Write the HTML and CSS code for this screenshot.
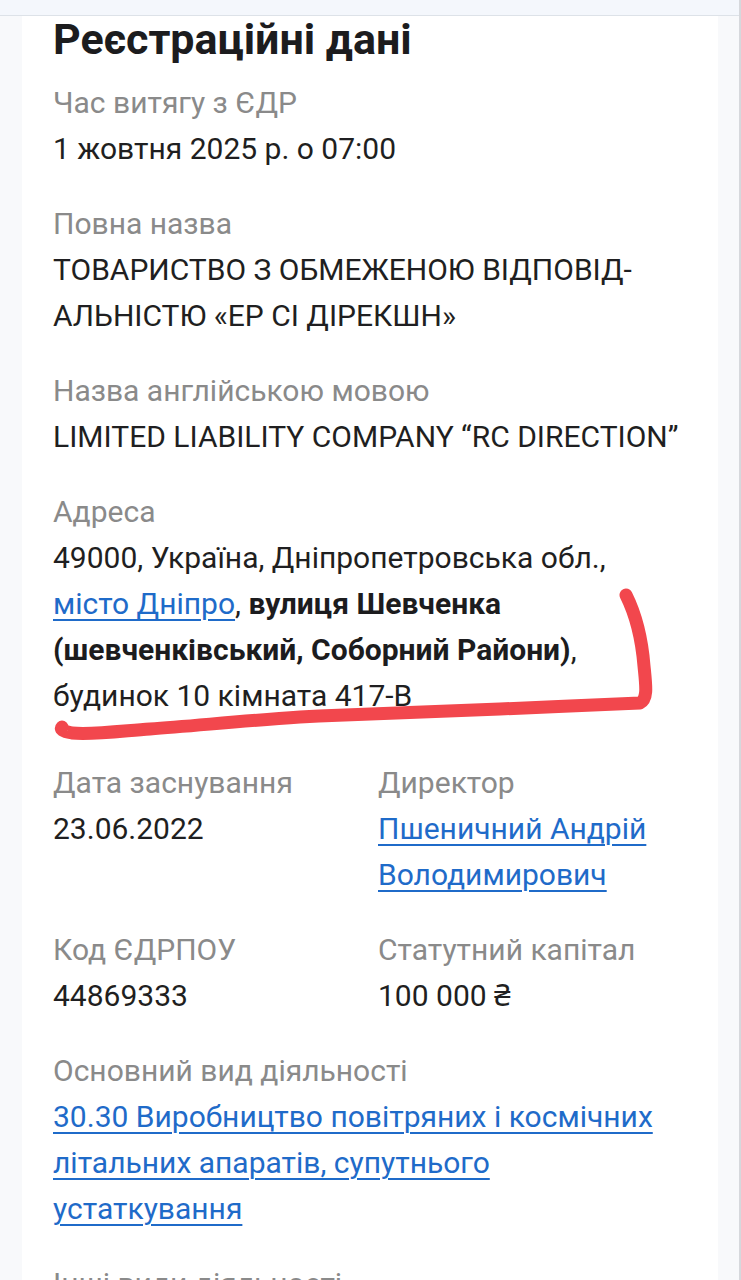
FILE: index.html
```html
<!DOCTYPE html>
<html lang="uk">
<head>
<meta charset="utf-8">
<title>Реєстраційні дані</title>
<link rel="stylesheet" href="styles.css">
</head>
<body>
<div class="page">
  <div class="topbar"></div>
  <div class="main">
    <section class="card">
      <h1 class="title">Реєстраційні дані</h1>

      <div class="field">
        <div class="label">Час витягу з ЄДР</div>
        <div class="value">1 жовтня 2025 р. о 07:00</div>
      </div>

      <div class="field">
        <div class="label">Повна назва</div>
        <div class="value">ТОВАРИСТВО З ОБМЕЖЕНОЮ ВІДПОВІД-<br>АЛЬНІСТЮ «ЕР СІ ДІРЕКШН»</div>
      </div>

      <div class="field">
        <div class="label">Назва англійською мовою</div>
        <div class="value">LIMITED LIABILITY COMPANY “RC DIRECTION”</div>
      </div>

      <div class="field field-address">
        <div class="label">Адреса</div>
        <div class="value">49000, Україна, Дніпропетровська обл.,<br><a class="link" href="#">місто Дніпро</a>, <b>вулиця Шевченка<br>(шевченківський, Соборний Райони)</b>,<br>будинок 10 кімната 417-В</div>
        <svg class="scribble" width="640" height="170" viewBox="0 0 640 170" aria-hidden="true">
          <path d="M584 14 C594 34 600 60 602 85 C604 105 606 118 598 122 C560 124 500 126 458 128 C380 131 320 133 258 136 C200 140 150 145 108 148 C80 150 50 154 30 152 C20 150 18 148 20 146" fill="none" stroke="#f2474d" stroke-width="13" stroke-linecap="round" stroke-linejoin="round"/>
        </svg>
      </div>

      <div class="field grid2">
        <div>
          <div class="label">Дата заснування</div>
          <div class="value">23.06.2022</div>
        </div>
        <div>
          <div class="label">Директор</div>
          <div class="value"><a class="link" href="#">Пшеничний Андрій<br>Володимирович</a></div>
        </div>
      </div>

      <div class="field grid2">
        <div>
          <div class="label">Код ЄДРПОУ</div>
          <div class="value">44869333</div>
        </div>
        <div>
          <div class="label">Статутний капітал</div>
          <div class="value">100 000 ₴</div>
        </div>
      </div>

      <div class="field">
        <div class="label">Основний вид діяльності</div>
        <div class="value"><a class="link" href="#">30.30 Виробництво повітряних і космічних<br>літальних апаратів, супутнього<br>устаткування</a></div>
      </div>

      <div class="field field-last">
        <div class="label">Інші види діяльності</div>
      </div>
    </section>
  </div>
</div>
</body>
</html>
```

FILE: styles.css
```css
* { box-sizing: border-box; }
html, body { margin: 0; padding: 0; }
body {
  background: #f8f9fb;
  font-family: Roboto, "Noto Sans", "Liberation Sans", sans-serif;
  overflow: hidden;
}
.page {
  height: 1280px;
  border-right: 2px solid #d6d8dc;
  overflow: hidden;
}
.topbar {
  height: 16px;
  background: #f4f7fc;
  border-bottom: 1px solid #dde2e8;
}
.main {
  padding: 0 21px 0 22px;
}
.card {
  position: relative;
  background: #ffffff;
  padding: 0 10px 0 31px;
  min-height: 1300px;
}
.title {
  margin: 0 0 18px;
  font-size: 43px;
  line-height: 46px;
  font-weight: 700;
  color: #1c1c1e;
  white-space: nowrap;
}
.field { margin-bottom: 29px; position: relative; }
.field-address { margin-bottom: 41px; }
.label {
  font-size: 30px;
  line-height: 46px;
  color: #8a8a8a;
  white-space: nowrap;
}
.value {
  font-size: 30px;
  line-height: 46px;
  color: #1f1f21;
  white-space: nowrap;
}
.value b { font-weight: 700; color: #1c1c1e; }
.link {
  color: #1f6bc9;
  text-decoration: underline;
  text-underline-offset: 5px;
  text-decoration-thickness: 2px;
}
.grid2 {
  display: grid;
  grid-template-columns: 325px 1fr;
}
.scribble {
  position: absolute;
  left: -11px;
  top: 92px;
  pointer-events: none;
}
```
